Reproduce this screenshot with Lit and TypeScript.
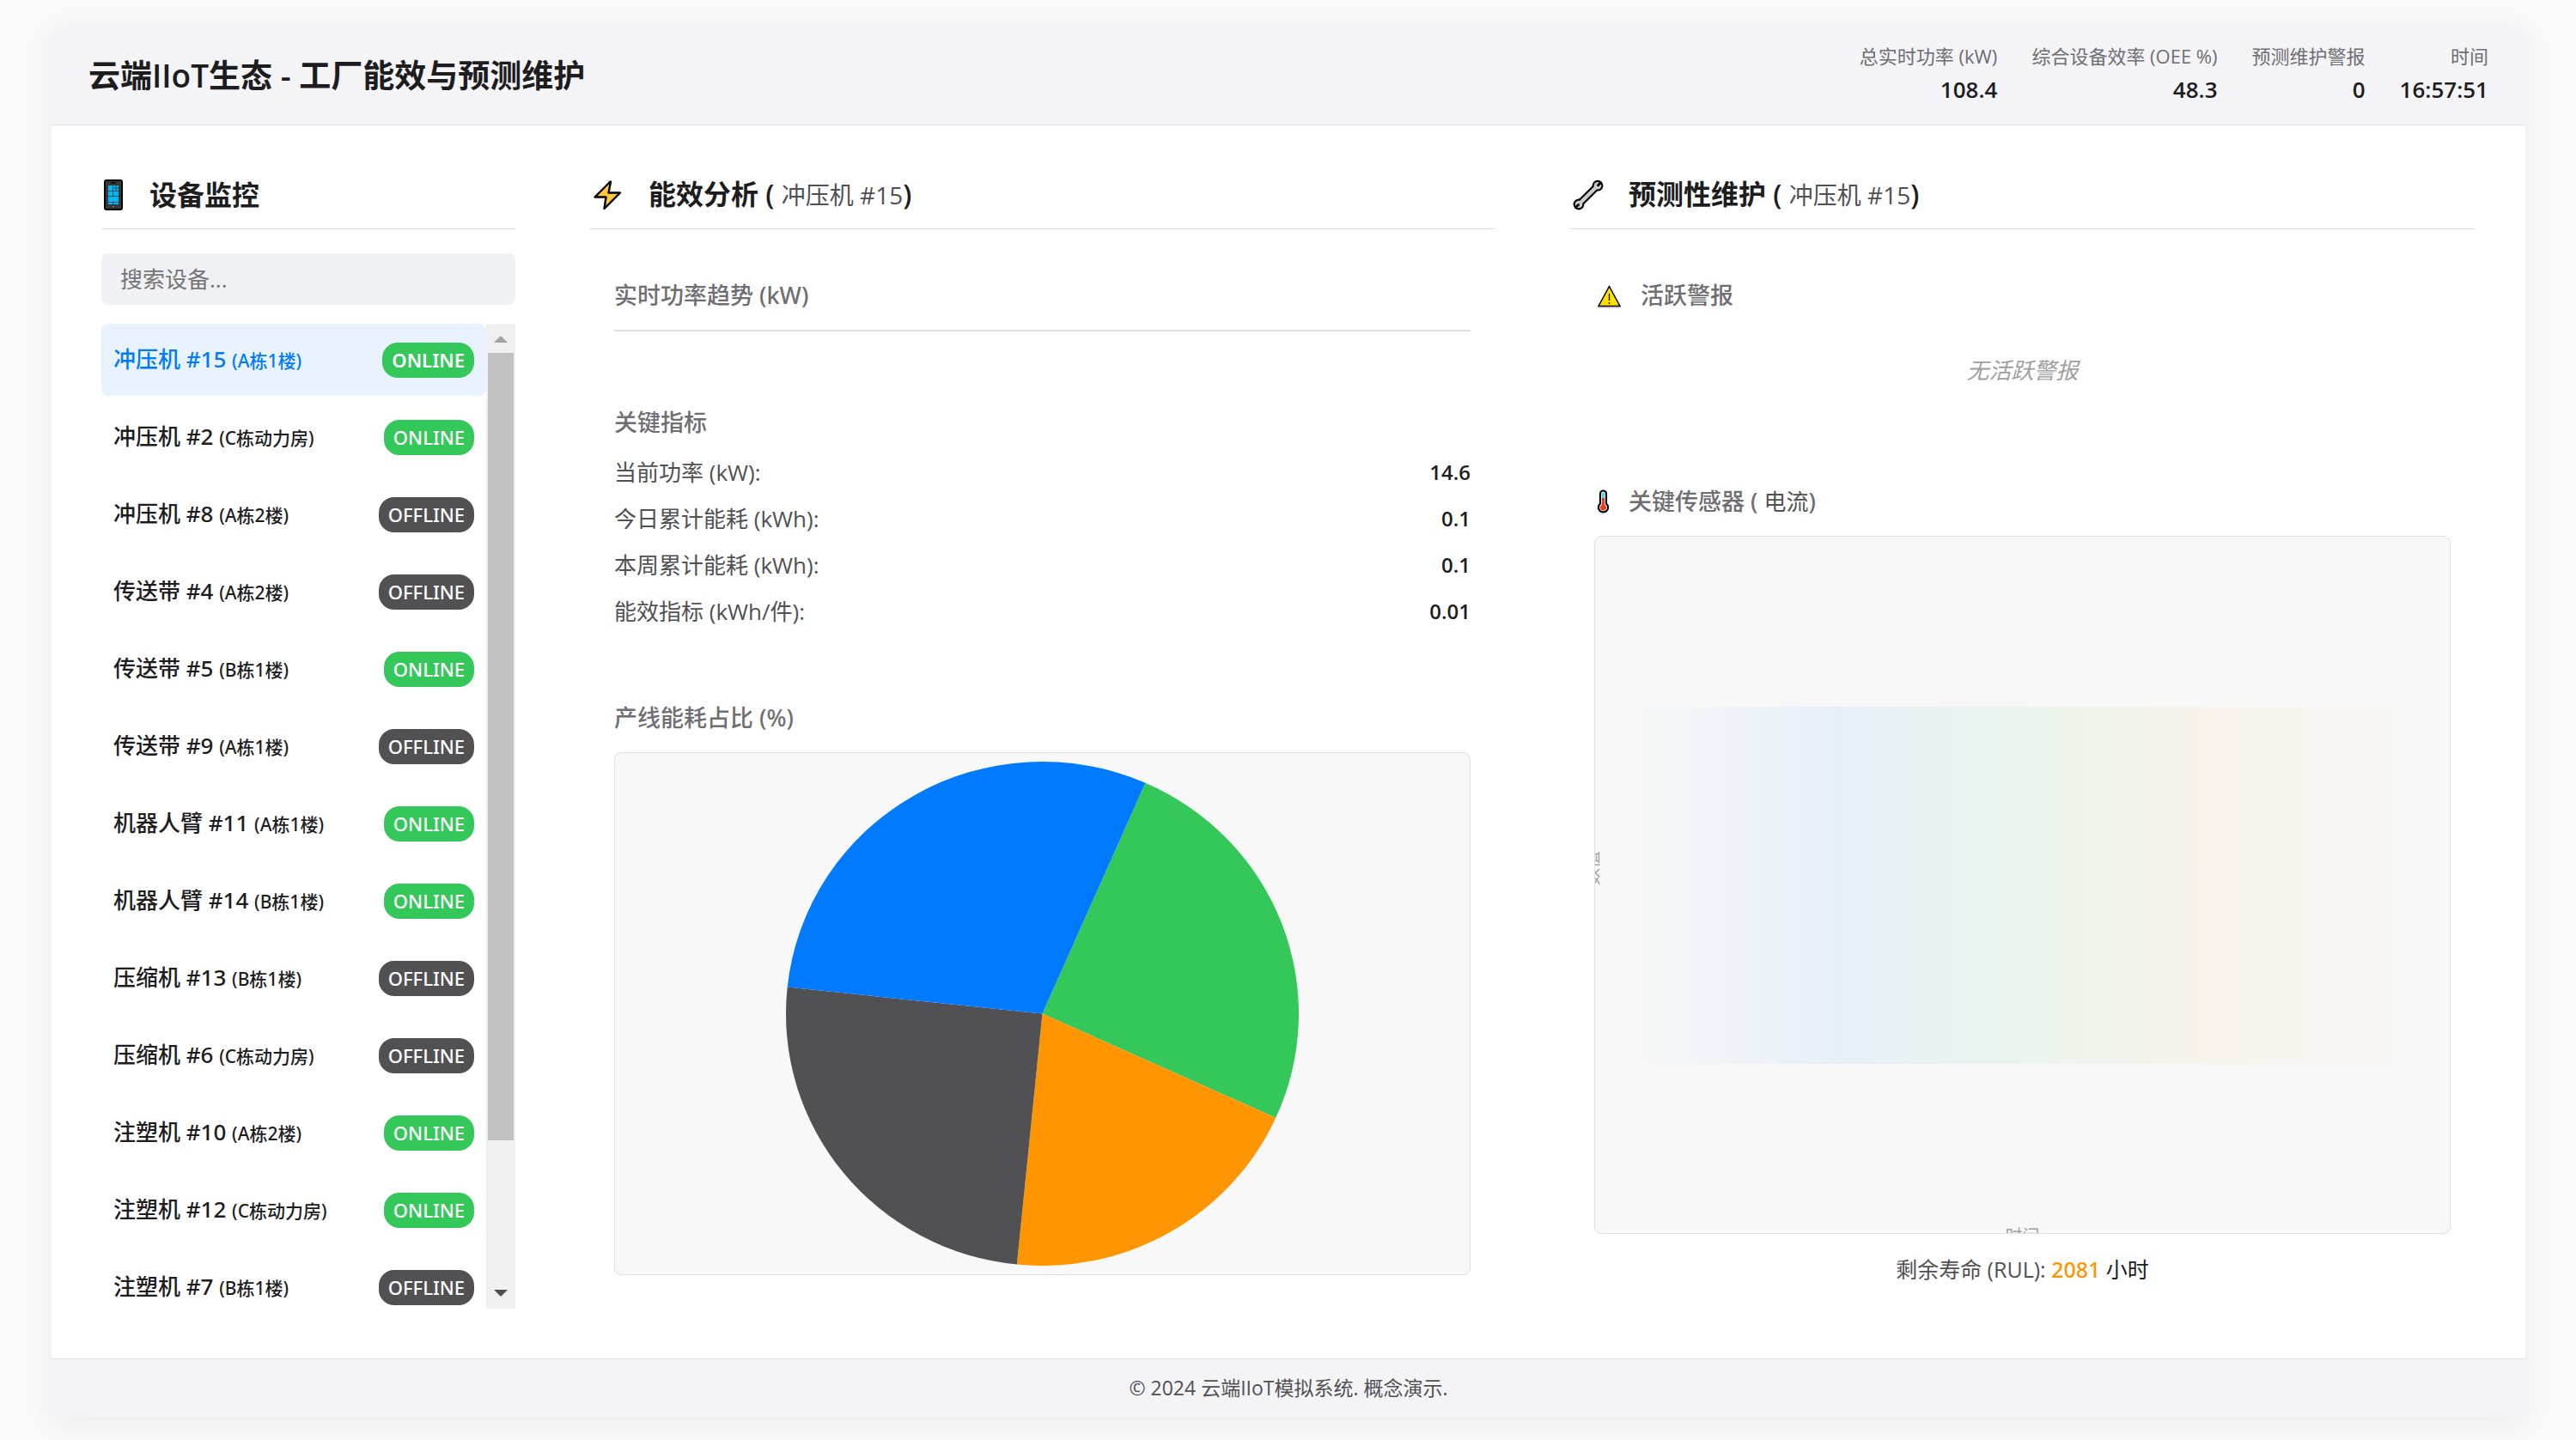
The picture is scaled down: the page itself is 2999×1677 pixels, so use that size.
import { LitElement, html, css, svg } from "lit";
import { customElement } from "lit/decorators.js";
import { classMap } from "lit/directives/class-map.js";

interface Device { name: string; place: string; online: boolean; active?: boolean; }

const devices: Device[] = [
  { name: "冲压机 #15", place: "A栋1楼", online: true, active: true },
  { name: "冲压机 #2", place: "C栋动力房", online: true },
  { name: "冲压机 #8", place: "A栋2楼", online: false },
  { name: "传送带 #4", place: "A栋2楼", online: false },
  { name: "传送带 #5", place: "B栋1楼", online: true },
  { name: "传送带 #9", place: "A栋1楼", online: false },
  { name: "机器人臂 #11", place: "A栋1楼", online: true },
  { name: "机器人臂 #14", place: "B栋1楼", online: true },
  { name: "压缩机 #13", place: "B栋1楼", online: false },
  { name: "压缩机 #6", place: "C栋动力房", online: false },
  { name: "注塑机 #10", place: "A栋2楼", online: true },
  { name: "注塑机 #12", place: "C栋动力房", online: true },
  { name: "注塑机 #7", place: "B栋1楼", online: false },
];

const stats = [
  ["总实时功率 (kW)", "108.4"],
  ["综合设备效率 (OEE %)", "48.3"],
  ["预测维护警报", "0"],
  ["时间", "16:57:51"],
];

const metrics = [
  ["当前功率 (kW):", "14.6"],
  ["今日累计能耗 (kWh):", "0.1"],
  ["本周累计能耗 (kWh):", "0.1"],
  ["能效指标 (kWh/件):", "0.01"],
];

const phoneIcon = svg`<svg class="icon phone" viewBox="0 0 30 38" aria-hidden="true">
  <rect x="4" y="2" width="20" height="34" rx="2" fill="#383838" stroke="#000" stroke-width="2"/>
  <rect x="11" y="4" width="6" height="2" fill="#111"/>
  <rect x="8" y="8" width="12" height="22" fill="#00b9f2"/>
  <path d="M8 14.500h12M8 20.500h12M8 27.500h12M13.500 8v12M13.500 28v2M17 8v6M14 11h6" stroke="#1d4c60" stroke-width="1" fill="none"/>
  <rect x="13" y="32" width="2" height="1" fill="#888"/></svg>`;
const boltIcon = svg`<svg class="icon" viewBox="0 0 43 38" aria-hidden="true">
  <path d="M24.500 3.500 6.500 21.500H19.500L17.500 35 36 16.500H22.500L25 3.800Z" fill="#ffc83d" stroke="#000" stroke-width="2.400" stroke-linejoin="round"/></svg>`;
const wrenchIcon = svg`<svg class="icon" viewBox="0 0 43 38" aria-hidden="true">
  <g stroke="#000" stroke-width="8.600"><path d="M11.500 29.500 32.500 8.700"/></g>
  <circle cx="33" cy="8.200" r="6.400"/><circle cx="11" cy="30" r="6.400"/>
  <g fill="#cbcbcb"><circle cx="33" cy="8.200" r="4.300"/><circle cx="11" cy="30" r="4.300"/></g>
  <path d="M11.500 29.500 32.500 8.700" stroke="#cbcbcb" stroke-width="4.400"/>
  <path d="M33.500 7.700 36.500 4.700M10.500 30.500 7.500 33.500" stroke="#000" stroke-width="3" stroke-linecap="round"/></svg>`;
const warnIcon = svg`<svg class="icon small" viewBox="0 0 34 30" aria-hidden="true">
  <path d="M4 29H31" stroke="#bbb" stroke-width="1"/>
  <path d="M17.500 4.500 30 27.500H5Z" fill="#fde000" stroke="#000" stroke-width="1.500"/>
  <path d="M17.500 13v8M17.500 23v2" stroke="#000" stroke-width="1.300"/></svg>`;
const thermoIcon = svg`<svg class="icon small thermo" viewBox="0 0 22 30" aria-hidden="true">
  <path d="M7 6a3.500 3.500 0 0 1 7 0V17.500a5.600 5.600 0 1 1-7 0Z" fill="#fff" stroke="#000" stroke-width="2.200"/>
  <path d="M9 6a1.500 1.500 0 0 1 3 0V11H9Z" fill="#50d0f5"/>
  <path d="M9 11h3v7.700a3.600 3.600 0 1 1-3 0Z" fill="#f03a17"/></svg>`;

/** Pie slices, in percent, clockwise from the start angle. */
const slices = [
  { value: 25.2, color: "#34c759" },
  { value: 19.8, color: "#ff9500" },
  { value: 25.1, color: "#515154" },
  { value: 29.9, color: "#007aff" },
];
const START = 23.7;

function slicePath(from: number, to: number): string {
  const at = (deg: number) => {
    const r = (deg * Math.PI) / 180;
    return `${(50 + 50 * Math.sin(r)).toFixed(3)} ${(50 - 50 * Math.cos(r)).toFixed(3)}`;
  };
  return `M50 50L${at(from)}A50 50 0 0 1 ${at(to)}Z`;
}

@customElement("app-root")
export class AppRoot extends LitElement {
  static styles = css`
    :host {
      --medium: "Noto Sans", "Noto Sans CJK SC", sans-serif;
      display: block;
      box-sizing: border-box;
      min-height: 100vh;
      padding: 28px 59px 28px 60px;
      background: #f9f9f9;
      color: #1d1d1f;
      font-family: "Open Sans", "Noto Sans CJK SC", sans-serif;
      font-size: 26px;
      line-height: 40px;
    }
    * { box-sizing: border-box; }
    h1, h2, h3, p, ul, dl, dd { margin: 0; padding: 0; }
    .card {
      display: flex; flex-direction: column;
      min-height: calc(100vh - 56px);
      border-radius: 18px; overflow: hidden; background: #fff;
      box-shadow: 0 8px 36px rgba(0, 0, 0, .05);
    }
    .top {
      display: flex; align-items: flex-start; justify-content: space-between;
      height: 118px; padding: 18px 43px 0;
      background: #f4f4f7; border-bottom: 1px solid #dfdfe1;
    }
    h1 { font-size: 37px; line-height: 84px; font-weight: 600; }
    .stats { display: flex; gap: 40px; text-align: right; }
    .stats dt { font-size: 22px; line-height: 38px; color: #6e6e73; }
    .stats dd { font-size: 26px; line-height: 40px; font-weight: 600; }
    .main {
      flex: 1; display: grid;
      grid-template-columns: 482px minmax(0, 1fr) minmax(0, 1fr);
      gap: 86px; padding: 58px;
    }
    .column { display: flex; flex-direction: column; min-width: 0; }
    h2 {
      display: flex; align-items: center; height: 63px; padding-bottom: 17px;
      font-size: 32px; line-height: 46px; font-weight: 600; white-space: pre;
      border-bottom: 1px solid #dfdfe1;
    }
    h2 .icon { margin-right: 26px; }
    h2 .sub { font-size: 28px; font-weight: 400; color: #515154; }
    .icon { flex: none; width: 43px; height: 38px; }
    .icon.phone { width: 30px; }
    .icon.small { width: 34px; height: 30px; margin-right: 20px; }
    .icon.thermo { width: 22px; margin-right: 18px; }
    .search {
      height: 60px; margin-top: 28px; padding: 0 22px; border: 0; border-radius: 8px;
      background: #f0f1f5; color: inherit; font: inherit;
    }
    .search::placeholder { color: #757575; opacity: 1; }
    .list { display: flex; height: 1147px; margin-top: 22px; overflow: hidden; }
    .devices { flex: 1; display: flex; flex-direction: column; gap: 6px; list-style: none; }
    .device {
      display: flex; flex: none; align-items: center; justify-content: space-between;
      width: 100%; height: 84px; padding: 0 14px; border: 0; border-radius: 8px;
      background: none; color: inherit; font: inherit; font-family: var(--medium);
      font-weight: 500; text-align: left;
    }
    .place { font-size: 21px; }
    .badge {
      padding: 0 11px; border-radius: 18px; background: #515154; color: #fff;
      font-size: 22px; line-height: 41px;
    }
    .online { background: #34c759; }
    .active { background: #e8f3ff; color: #007aff; }
    .active .badge { font-weight: 600; }
    .scrollbar {
      display: flex; flex-direction: column; align-items: center;
      width: 34px; background: #f0f0f0;
    }
    .arrow { width: 34px; height: 34px; }
    .track { flex: 1; width: 30px; }
    .thumb { height: 85%; background: #c1c1c1; }
    .panel { display: flex; flex-direction: column; padding: 0 29px; }
    h3 {
      display: flex; align-items: center; height: 42px;
      font-family: var(--medium); font-size: 27px; font-weight: 500; color: #6e6e73; white-space: pre;
    }
    .trend { margin-top: 56px; }
    .empty-chart { height: 2px; margin-top: 19px; background: #e0e0e2; }
    .keys { margin-top: 85px; }
    .metrics { padding-top: 10px; }
    .metric { display: flex; justify-content: space-between; height: 54px; line-height: 54px; }
    .metric dt { color: #515154; }
    .metric dd { font-size: 24px; font-weight: 600; }
    .share { margin-top: 76px; }
    .box { border: 1px solid #e0e0e2; border-radius: 8px; background: #f8f8f8; overflow: hidden; }
    .pie-box { height: 609px; margin-top: 19px; padding: 10px 0; }
    .pie { display: block; width: 597px; height: 587px; margin: 0 auto; }
    .none { height: 42px; margin-top: 45px; line-height: 42px; text-align: center; font-style: italic; color: #a0a0a3; }
    .sensor { margin-top: 111px; }
    .sensor-name { font-size: 26px; font-weight: 400; color: #515154; }
    .sensor-box { position: relative; display: grid; place-items: center; height: 813px; margin-top: 19px; }
    .band {
      width: 90%; height: 416px;
      background: linear-gradient(90deg, transparent, rgba(0, 122, 255, .07), rgba(52, 199, 89, .07), rgba(255, 149, 0, .05), transparent);
    }
    .axis { position: absolute; font-size: 20px; line-height: 24px; color: #a0a0a0; }
    .axis.x { left: 50%; bottom: -16px; transform: translateX(-50%); }
    .axis.y { left: -23px; top: calc(50% - 32px); transform: rotate(-90deg); }
    .rul { margin-top: 21px; font-size: 25px; text-align: center; color: #515154; }
    .rul .hours { font-family: var(--medium); font-weight: 500; color: #ff9500; }
    .rul .unit { color: #1d1d1f; }
    footer {
      height: 68px; border-top: 1px solid #dfdfe1; background: #f4f4f7;
      color: #515154; font-size: 23px; line-height: 67px; text-align: center;
    }
  `;

  private renderDevice(d: Device) {
    return html`<li><button class=${classMap({ device: true, active: !!d.active })}>
      <span>${d.name} <span class="place">(${d.place})</span></span>
      <span class=${classMap({ badge: true, online: d.online })}>${d.online ? "ONLINE" : "OFFLINE"}</span>
    </button></li>`;
  }

  private renderPie() {
    let angle = START;
    return html`<svg class="pie" viewBox="0 0 100 100" preserveAspectRatio="none" role="img">
      ${slices.map((s) => {
        const from = angle;
        angle += s.value * 3.6;
        return svg`<path d=${slicePath(from, angle)} fill=${s.color}></path>`;
      })}</svg>`;
  }

  render() {
    return html`<div class="card">
      <header class="top">
        <h1>云端IIoT生态 - 工厂能效与预测维护</h1>
        <dl class="stats">${stats.map(([k, v]) => html`<div><dt>${k}</dt><dd>${v}</dd></div>`)}</dl>
      </header>
      <main class="main">
        <section class="column">
          <h2>${phoneIcon}<span>设备监控</span></h2>
          <input class="search" type="search" placeholder="搜索设备..." aria-label="搜索设备" />
          <div class="list">
            <ul class="devices">${devices.map((d) => this.renderDevice(d))}</ul>
            <div class="scrollbar" aria-hidden="true">
              <svg class="arrow" viewBox="0 0 34 34"><path d="M9 22 17 14 25 22Z" fill="#a3a3a3"/></svg>
              <div class="track"><div class="thumb"></div></div>
              <svg class="arrow" viewBox="0 0 34 34"><path d="M9 12 17 20 25 12Z" fill="#505050"/></svg>
            </div>
          </div>
        </section>
        <section class="column">
          <h2>${boltIcon}<span>能效分析 ( <span class="sub">冲压机 #15</span>)</span></h2>
          <div class="panel">
            <h3 class="trend">实时功率趋势 (kW)</h3>
            <div class="empty-chart"></div>
            <h3 class="keys">关键指标</h3>
            <dl class="metrics">${metrics.map(([k, v]) => html`<div class="metric"><dt>${k}</dt><dd>${v}</dd></div>`)}</dl>
            <h3 class="share">产线能耗占比 (%)</h3>
            <div class="box pie-box">${this.renderPie()}</div>
          </div>
        </section>
        <section class="column">
          <h2>${wrenchIcon}<span>预测性维护 ( <span class="sub">冲压机 #15</span>)</span></h2>
          <div class="panel">
            <h3 class="trend">${warnIcon}<span>活跃警报</span></h3>
            <p class="none">无活跃警报</p>
            <h3 class="sensor">${thermoIcon}<span>关键传感器 ( <span class="sensor-name">电流</span>)</span></h3>
            <div class="box sensor-box">
              <div class="band"></div>
              <span class="axis y">数值</span>
              <span class="axis x">时间</span>
            </div>
            <p class="rul">剩余寿命 (RUL): <span class="hours">2081</span> <span class="unit">小时</span></p>
          </div>
        </section>
      </main>
      <footer>© 2024 云端IIoT模拟系统. 概念演示.</footer>
    </div>`;
  }
}
